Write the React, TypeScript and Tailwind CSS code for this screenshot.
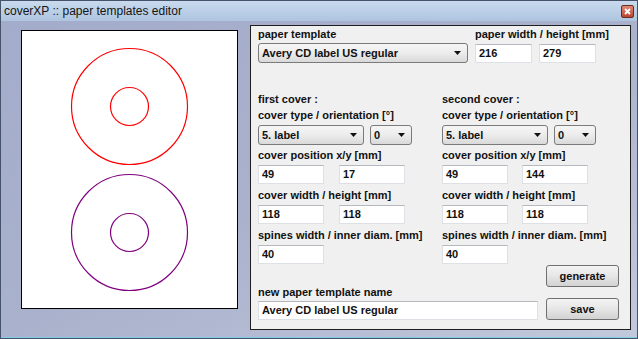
import React from 'react';

const font = "font-['Liberation_Sans',Arial,sans-serif]";

const Label = ({ children }: { children: React.ReactNode }) => (
    <div className="h-[13px] leading-[13px] text-[11px] font-bold text-[#111] whitespace-nowrap">{children}</div>
);

const Field = ({ value, className = 'w-[66px]' }: { value: string; className?: string }) => (
    <div className={`${className} h-[19px] bg-white border border-[#dde1e6] border-t-[#b5b8be] pl-[3px] flex items-center text-[11px] font-bold text-[#111]`}>
        {value}
    </div>
);

const Arrow = () => (
    <svg width="7" height="4" viewBox="0 0 7 4" className="shrink-0">
        <polygon points="0,0 7,0 3.5,4" fill="#111" />
    </svg>
);

const Combo = ({ value, className }: { value: string; className: string }) => (
    <div className={`${className} h-[20px] rounded-[3px] border border-[#7a7a7a] bg-gradient-to-b from-[#f6f6f6] via-[#ececec] to-[#d9d9d9] flex items-center justify-between pl-[3px] pr-[6px] text-[11px] font-bold text-[#111]`}>
        <span>{value}</span>
        <Arrow />
    </div>
);

const Btn = ({ children }: { children: React.ReactNode }) => (
    <div className="w-[73px] h-[22px] rounded-[3px] border border-[#707070] bg-gradient-to-b from-[#f4f4f4] via-[#e6e6e6] to-[#d2d2d2] flex items-center justify-center text-[11px] font-bold text-[#111]">
        {children}
    </div>
);

// one "first cover / second cover" column
const CoverColumn = ({ title, y, gap }: { title: string; y: string; gap: string }) => (
    <div className="flex flex-col">
        <Label>{title}</Label>
        <div className="mt-[3px]"><Label>cover type / orientation [°]</Label></div>
        <div className="mt-[3px] flex gap-[6px]">
            <Combo value="5. label" className="w-[106px]" />
            <Combo value="0" className="w-[42px]" />
        </div>
        <div className="mt-[4px]"><Label>cover position x/y [mm]</Label></div>
        <div className={`mt-[3px] flex ${gap}`}>
            <Field value="49" />
            <Field value={y} />
        </div>
        <div className="mt-[5px]"><Label>cover width / height [mm]</Label></div>
        <div className={`mt-[3px] flex ${gap}`}>
            <Field value="118" />
            <Field value="118" />
        </div>
        <div className="mt-[5px]"><Label>spines width / inner diam. [mm]</Label></div>
        <div className="mt-[3px]">
            <Field value="40" />
        </div>
    </div>
);

export default function App() {
    return (
        <div className={`${font} w-[638px] h-[339px] flex flex-col border border-[#44526a] bg-[#a6afcb] overflow-hidden`}>
            {/* title bar */}
            <div className="h-[20px] shrink-0 flex items-center justify-between pl-[3px] pr-[3px] bg-gradient-to-b from-[#c9daee] to-[#aec4df]">
                <span className="text-[12px] text-[#141414]">coverXP :: paper templates editor</span>
                <div className="w-[13px] h-[13px] rounded-[2px] border border-[#6b2c22] bg-gradient-to-b from-[#e08a78] to-[#b8432e] flex items-center justify-center">
                    <svg width="7" height="7" viewBox="0 0 7 7">
                        <path d="M1 1 L6 6 M6 1 L1 6" stroke="#fff" strokeWidth="1.8" />
                    </svg>
                </div>
            </div>

            {/* body */}
            <div className="flex-1 flex items-start pl-[20px] border-b border-[#7fcde6] bg-gradient-to-br from-[#a3accb] via-[#a9b1cc] to-[#c3c9dc]">
                {/* paper preview */}
                <div className="mt-[9px] w-[217px] h-[279px] border border-black bg-white shrink-0">
                    <svg width="215" height="277" viewBox="0 0 215 277">
                        <circle cx="107.5" cy="75.5" r="58" fill="none" stroke="#ff0000" strokeWidth="1.2" />
                        <circle cx="107.5" cy="75.5" r="19" fill="none" stroke="#ff0000" strokeWidth="1.2" />
                        <circle cx="107.5" cy="201.5" r="58" fill="none" stroke="#800080" strokeWidth="1.2" />
                        <circle cx="107.5" cy="201.5" r="19" fill="none" stroke="#800080" strokeWidth="1.2" />
                    </svg>
                </div>

                {/* settings panel */}
                <div className="ml-[12px] mt-[4px] w-[381px] h-[305px] border border-[#1e1e1e] bg-[#f0f0f0] pl-[7px] pt-[2px] flex flex-col shrink-0">
                    <div className="flex">
                        <div className="w-[217px] flex flex-col">
                            <Label>paper template</Label>
                            <div className="mt-[2px]">
                                <Combo value="Avery CD label US regular" className="w-[210px]" />
                            </div>
                        </div>
                        <div className="flex flex-col">
                            <Label>paper width / height [mm]</Label>
                            <div className="mt-[3px] flex gap-[7px]">
                                <Field value="216" className="w-[57px]" />
                                <Field value="279" className="w-[57px]" />
                            </div>
                        </div>
                    </div>

                    <div className="mt-[30px] flex">
                        <div className="w-[184px]">
                            <CoverColumn title="first cover :" y="17" gap="gap-[15px]" />
                        </div>
                        <CoverColumn title="second cover :" y="144" gap="gap-[14px]" />
                    </div>

                    <div className="flex items-end gap-[8px]">
                        <div className="flex flex-col">
                            <Label>new paper template name</Label>
                            <div className="mt-[2px]">
                                <Field value="Avery CD label US regular" className="w-[280px]" />
                            </div>
                        </div>
                        <div className="flex flex-col mt-[1px]">
                            <Btn>generate</Btn>
                            <div className="mt-[11px]">
                                <Btn>save</Btn>
                            </div>
                        </div>
                    </div>
                </div>
            </div>
        </div>
    );
}
